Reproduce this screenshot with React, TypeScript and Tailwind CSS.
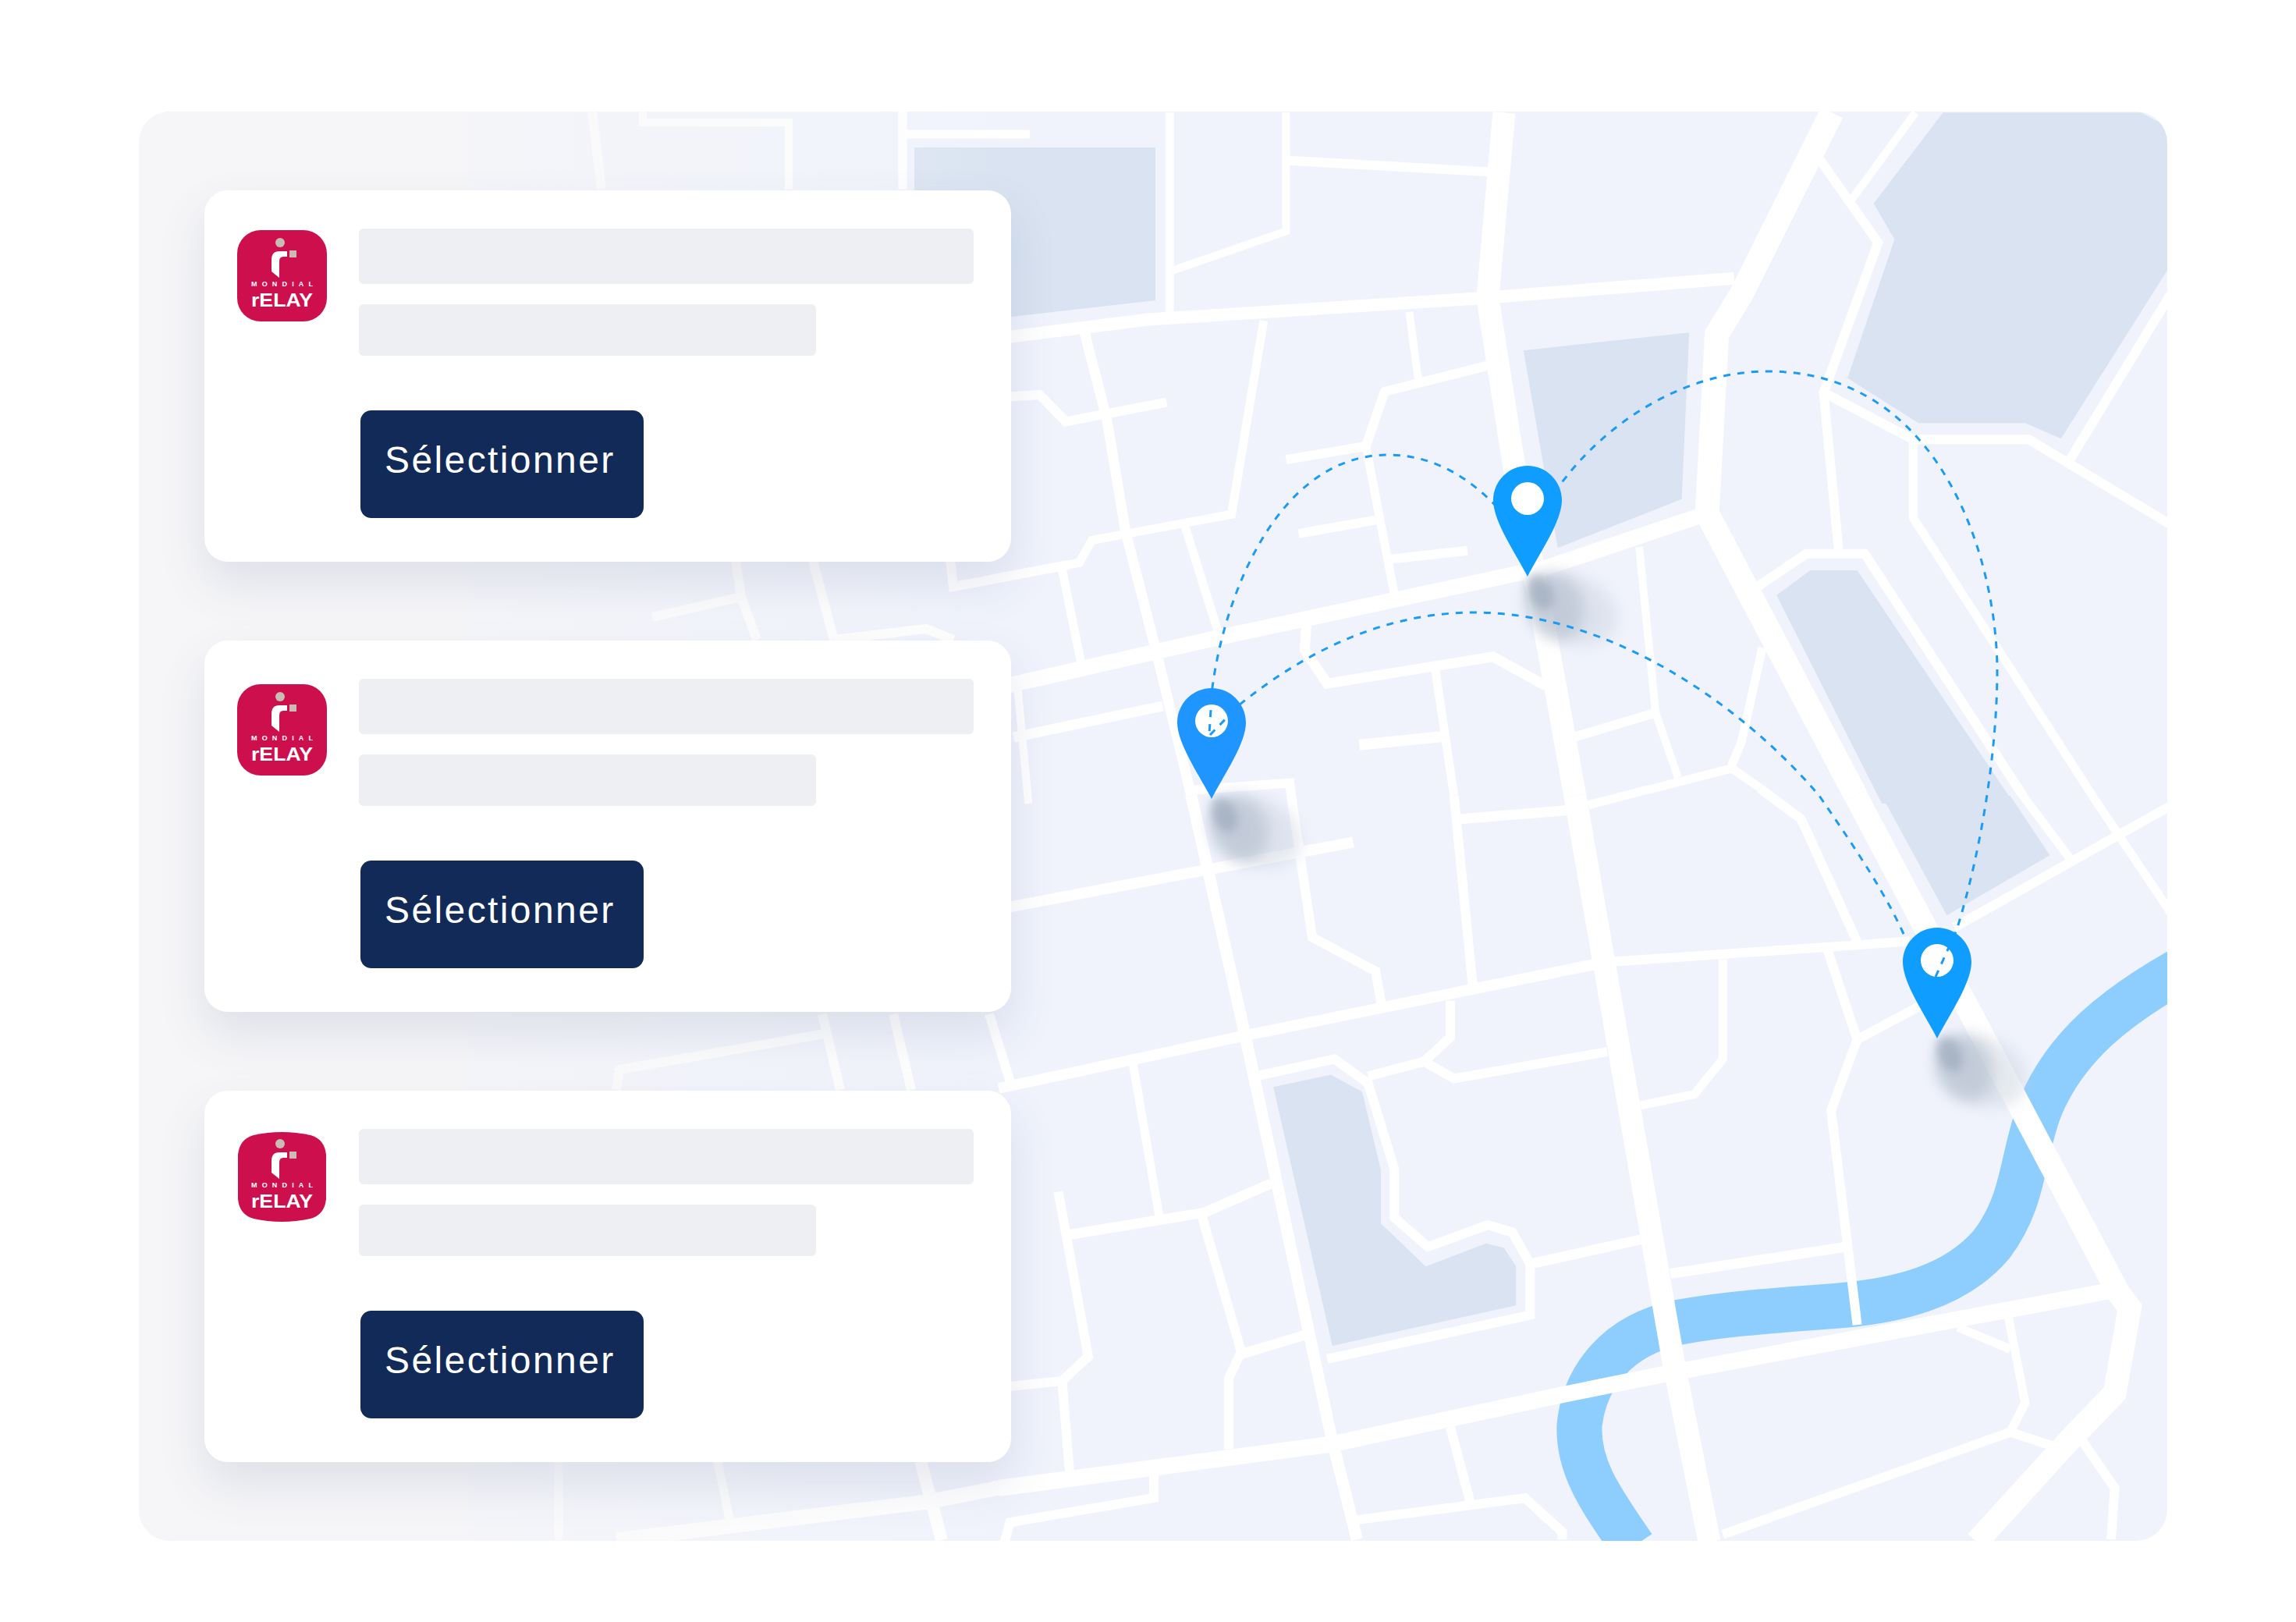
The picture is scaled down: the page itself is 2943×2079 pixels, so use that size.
import React from 'react';

type Road = [string, number];

// traced from the upper half of the map (stretched coordinates, see the transform below)
const UPPER_ROADS: Road[] = [
  ['229,25 229,470', 11],
  ['385,25 385,290 232,378', 10],
  ['388,132 655,157', 12],
  ['115,515 145,710 170,960 210,1220 258,1550', 13],
  ['355,490 312,922 125,980 108,1030 -20,1070', 11],
  ['225,672 90,715 55,655 -40,665', 12],
  ['85,1045 110,1250', 11],
  ['250,950 295,1190', 11],
  ['550,470 562,620', 10],
  ['655,590 517,648 492,770 385,800', 12],
  ['492,770 530,1100', 11],
  ['402,965 505,935', 12],
  ['525,1022 628,1003', 12],
  ['858,995 880,1365 910,1510', 10],
  ['1023,1220 995,1430 980,1490 870,1537', 11],
  ['880,1365 770,1420', 12],
  ['980,1487 1020,1533', 11],
  ['413,1150 410,1225 440,1300 662,1240 733,1305', 13],
  ['610,1550 585,1270', 11],
  ['20,1420 220,1350', 13],
  ['25,1300 40,1568', 10],
  ['483,1437 595,1418', 14],
  ['258,1538 390,1522 392,1550', 12],
  ['1100,130 1178,315 1105,650 1125,1000', 12],
  ['1228,25 1140,225', 10],
  ['1570,430 1435,800', 12],
  ['1105,650 1225,755 1380,755 1570,945', 12],
  ['1225,755 1225,930 1465,1550', 11],
  ['1015,1085 1082,1010 1160,1010 1372,1550', 12],
];

const UPPER_MAIN: Road[] = [
  ['-30,535 200,487 640,440 985,395', 16],
  ['677,25 655,440 690,810 745,1300 772,1550', 29],
  ['1116,25 995,430 962,520 949,920 1148,1550', 31],
  ['940,925 735,1040 300,1195 -30,1320', 20],
];

// same for the lower half
const LOWER_ROADS: Road[] = [
  ['258,0 330,490 445,1310 480,1525', 15],
  ['392,0 420,290 505,360 513,430', 12],
  ['-20,238 475,95', 14],
  ['610,0 635,390', 12],
  ['615,48 760,30', 13],
  ['790,19 870,-13', 11],
  ['825,340 1160,305 1220,298', 12],
  ['605,420 605,495 570,545 610,580 815,525', 12],
  ['570,545 495,575', 12],
  ['345,575 450,540 495,590 530,765 530,865 575,925 655,880 688,895 712,960 712,1065 440,1155', 12],
  ['712,960 860,910', 13],
  ['180,550 215,860', 11],
  ['80,812 120,1150 85,1200 -40,1220', 12],
  ['95,900 275,855 365,795', 13],
  ['272,860 325,1140 308,1195 308,1340', 12],
  ['325,1145 412,1105', 13],
  ['85,1200 95,1385', 12],
  ['208,1385 208,1440 15,1490 8,1530', 12],
  ['605,1295 632,1450', 12],
  ['480,1485 705,1440 755,1510 755,1525', 12],
  ['970,1515 1355,1305 1415,1335', 12],
  ['1352,1065 1375,1245 1355,1305', 11],
  ['1285,1090 1355,1135', 11],
  ['1450,1320 1495,1420 1490,1525', 12],
  ['1110,315 1150,500 1115,645 1150,1085', 12],
  ['1150,500 1235,430', 12],
  ['970,335 970,540 932,612 860,635', 11],
  ['900,980 1135,925', 13],
  ['1020,-15 1075,48 1150,300', 12],
  ['1372,0 1438,135', 11],
  ['1465,0 1570,240', 11],
  ['1570,20 1280,270', 12],
];

const LOWER_MAIN: Road[] = [
  ['0,600 320,495 800,345', 14],
  ['772,0 905,1170 952,1530', 29],
  ['0,1420 445,1330 750,1230 895,1185 1500,1012', 21],
  ['1148,0 1500,1020 1515,1050 1495,1225 1435,1320 1310,1530', 30],
];

// the bits of road seen faintly between the cards, in page pixels
const FADED_ROADS: Road[] = [
  ['759,143 771,243', 12],
  ['824,143 824,157 1011,157 1011,243', 10],
  ['1157,143 1157,243', 11],
  ['1157,172 1320,172', 11],
  ['943,719 950,765 970,820', 12],
  ['950,765 836,791', 12],
  ['1042,719 1069,820', 12],
  ['1218,719 1222,752 1370,724', 12],
  ['1069,820 1187,806 1222,820', 12],
  ['1054,1300 1077,1397', 12],
  ['1057,1325 794,1371 790,1397', 12],
  ['1145,1300 1168,1397', 12],
  ['1268,1300 1295,1387', 12],
  ['716,1873 716,1974', 11],
  ['920,1873 935,1947', 11],
  ['1180,1873 1207,1974', 16],
  ['790,1974 1188,1925 1280,1907', 19],
];

function Roads({ list }: { list: Road[] }) {
  return (
    <>
      {list.map(([points, width]) => (
        <polyline
          key={points}
          points={points}
          fill="none"
          stroke="#ffffff"
          strokeWidth={width}
          vectorEffect="non-scaling-stroke"
        />
      ))}
    </>
  );
}

const PIN = 'M0 -142C24.3 -142 44 -122 44 -98C44 -70 14 -28 0 0C-14 -28 -44 -70 -44 -98C-44 -122 -24.3 -142 0 -142ZM0 -121A21 21 0 1 0 0 -79A21 21 0 1 0 0 -121Z';

function PinShadow({ x, y }: { x: number; y: number }) {
  return (
    <g transform={`translate(${x} ${y})`}>
      <ellipse cx="58" cy="42" rx="60" ry="44" transform="rotate(25 58 42)" fill="#c5cedb" opacity="0.42" filter="url(#blurWide)" />
      <ellipse cx="35" cy="38" rx="36" ry="44" transform="rotate(-25 35 38)" fill="#aeb9c8" opacity="0.55" filter="url(#blurWide)" />
      <ellipse cx="16" cy="20" rx="15" ry="24" transform="rotate(-25 16 20)" fill="#8d9cb0" opacity="0.5" filter="url(#blurTight)" />
    </g>
  );
}

function MapDrawing() {
  return (
    <svg className="absolute inset-0" width="2600" height="1832" viewBox="178 143 2600 1832">
      <defs>
        <filter id="blurWide" x="-40%" y="-40%" width="180%" height="180%">
          <feGaussianBlur stdDeviation="9" />
        </filter>
        <filter id="blurTight" x="-60%" y="-60%" width="220%" height="220%">
          <feGaussianBlur stdDeviation="6" />
        </filter>
      </defs>

      {/* blocks + river go under the roads */}
      <g fill="#d9e3f1">
        <polygon points="1172,189 1481,189 1481,385 1172,420" />
      </g>
      <g transform="translate(1280 130) scale(0.957 0.574)" fill="#d9e3f1">
        <polygon points="1265,25 1530,25 1570,60 1570,365 1423,753 1375,718 1232,718 1137,618 1200,308 1172,228" />
        <polygon points="703,556 925,516 915,888 749,997" />
        <polygon points="1042,1103 1087,1047 1150,1047 1360,1568 1183,1568" />
      </g>
      <g transform="translate(1280 1020) scale(0.957 0.625)" fill="#d9e3f1">
        <polygon points="1183,0 1355,0 1408,122 1270,245" />
        <polygon points="368,597 445,572 487,607 512,768 512,877 572,965 653,918 677,927 693,965 693,1045 447,1128" />
        <path
          d="M1580 360C1500 430 1430 510 1395 640C1370 740 1375 830 1330 920C1280 1010 1200 1035 1130 1045C1050 1055 980 1060 910 1080C830 1105 785 1190 778 1290C775 1380 810 1450 850 1540"
          fill="none"
          stroke="#8dceff"
          strokeWidth="58"
          vectorEffect="non-scaling-stroke"
        />
      </g>

      <Roads list={FADED_ROADS} />
      <g transform="translate(1280 130) scale(0.957 0.574)">
        <Roads list={UPPER_ROADS} />
        <Roads list={UPPER_MAIN} />
      </g>
      <g transform="translate(1280 1020) scale(0.957 0.625)">
        <Roads list={LOWER_ROADS} />
        <Roads list={LOWER_MAIN} />
      </g>

      <PinShadow x={1958} y={739} />
      <PinShadow x={1553} y={1024} />
      <PinShadow x={2483} y={1331} />

      <g fill="#ffffff">
        <circle cx="1958" cy="639" r="22" />
        <circle cx="1553" cy="924" r="22" />
        <circle cx="2483" cy="1231" r="22" />
      </g>

      <g fill="none" stroke="#1a9bf5" strokeWidth="3" strokeDasharray="9 9">
        <path d="M1549 955L1554 881C1570 760 1640 583 1779 583C1840 583 1885 615 1917 648" />
        <path d="M2481 1252L2508 1192C2540 1090 2560 960 2560 860C2560 720 2490 476 2266 476C2160 476 2060 540 2000 621" />
        <path d="M1551 942L1589 903C1680 830 1780 785 1890 785C2060 785 2230 900 2332 1020C2380 1090 2420 1150 2443 1204" />
      </g>

      <path d={PIN} transform="translate(1958 739)" fill="#0f9dff" fillRule="evenodd" />
      <path d={PIN} transform="translate(1553 1024)" fill="#1f96ff" fillRule="evenodd" />
      <path d={PIN} transform="translate(2483 1331)" fill="#0f9dff" fillRule="evenodd" />
    </svg>
  );
}

function RelayLogo({ badge }: { badge?: boolean }) {
  return (
    <svg width="115" height="117" viewBox="0 0 115 117" className="shrink-0">
      {badge ? (
        <path d="M21 5Q57 -3 94 5Q112 10 114 30L114 87Q112 107 94 112Q57 120 21 112Q3 107 1 87L1 30Q3 10 21 5Z" fill="#ce0f4e" />
      ) : (
        <rect width="115" height="117" rx="30" fill="#ce0f4e" />
      )}
      <circle cx="55" cy="16" r="6" fill="#c9bdb3" />
      <rect x="67" y="26" width="9" height="9" fill="#c9bdb3" />
      <path d="M44 53V38Q44 27 54 27H64V34H59Q54 34 54 40V61Z" fill="#ffffff" />
      <text x="18" y="72" fontSize="9" fontWeight="700" textLength="79" fill="#ffffff" fontFamily="'Liberation Sans', sans-serif">
        MONDIAL
      </text>
      <text x="18" y="98" fontWeight="700" fontSize="24" textLength="79" lengthAdjust="spacingAndGlyphs" fill="#ffffff" fontFamily="'Liberation Sans', sans-serif">
        rELAY
      </text>
    </svg>
  );
}

function Card({ logoClass, badge }: { logoClass: string; badge?: boolean }) {
  return (
    <div className="flex h-[476px] w-[1034px] rounded-[30px] bg-white pl-[42px] pt-[49px] shadow-[0_28px_60px_rgba(70,85,130,0.13)]">
      <div className={`w-[156px] shrink-0 ${logoClass}`}>
        <RelayLogo badge={badge} />
      </div>
      <div className="flex flex-col">
        <div className="h-[71px] w-[788px] rounded-md bg-[#eeeff3]" />
        <div className="mt-[26px] h-[66px] w-[586px] rounded-md bg-[#eeeff3]" />
        <button className="ml-[2px] mt-[70px] h-[138px] w-[363px] rounded-[14px] bg-[#112a58] pb-[10px] pl-[31px] text-left font-['Liberation_Sans',sans-serif] text-[48px] tracking-[2.4px] text-white">
          Sélectionner
        </button>
      </div>
    </div>
  );
}

export default function App() {
  return (
    <div className="min-h-screen bg-white pl-[178px] pt-[143px]">
      <div className="relative h-[1832px] w-[2600px] overflow-hidden rounded-[40px] bg-[#f0f3fc]">
        <MapDrawing />
        {/* grey wash fading out behind the cards */}
        <div className="absolute inset-y-0 left-0 w-[1130px] bg-[linear-gradient(90deg,#f6f6f8_0,#f6f6f8_37.5%,rgba(246,246,248,0.75)_37.5%,rgba(246,246,248,0)_100%)]" />
        <div className="relative flex flex-col gap-[101px] pl-[84px] pt-[101px]">
          <Card logoClass="pt-[2px]" />
          <Card logoClass="pt-[7px]" />
          <Card logoClass="pt-[3px]" badge />
        </div>
      </div>
    </div>
  );
}
